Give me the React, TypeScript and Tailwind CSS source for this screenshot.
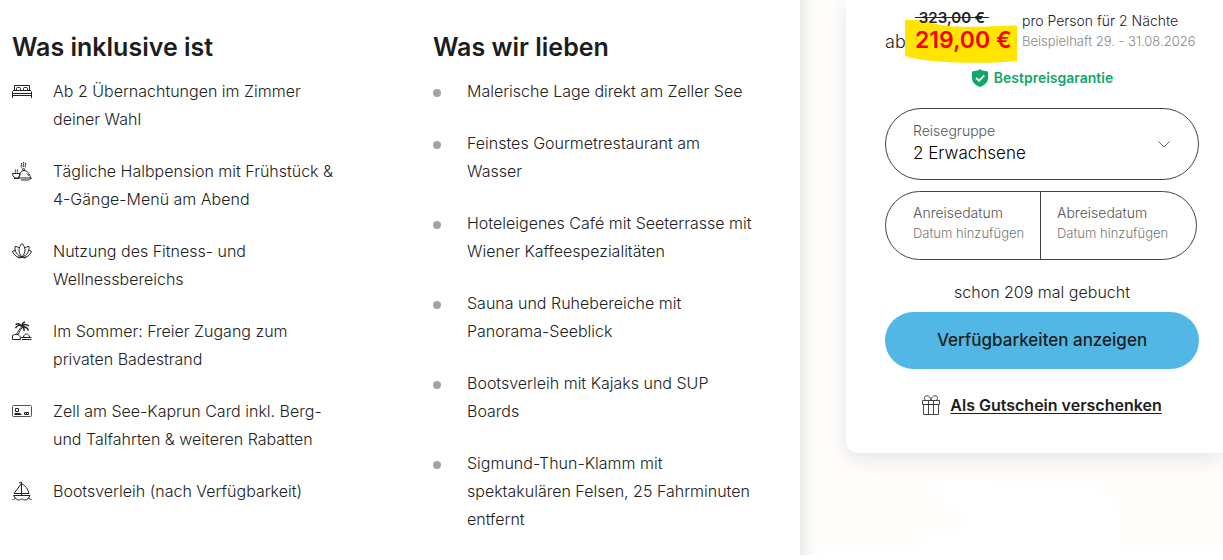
import type { ReactNode } from "react"

type InclusiveItem = {
  icon: ReactNode;
  text: string;
};

function LineIcon({ children }: { children: ReactNode }) {
  return (
    <svg
      viewBox="0 0 20 20"
      className="h-5 w-5 fill-none stroke-[#222]"
      strokeWidth={1}
      strokeLinejoin="round"
      aria-hidden="true"
    >
      {children}
    </svg>
  );
}

const inclusiveItems: InclusiveItem[] = [
  {
    icon: (
      <LineIcon>
        <path d="M2.5 9.5V4.5h15v5M1 9.5h18M.5 17V10.5M19.5 17V10.5M.5 12.5h19M.5 14.5h19" />
        <path d="M4.5 9V7.500c0-.6.400-1 1-1h2c.6 0 1 .4 1 1V9M11.500 9V7.500c0-.6.4-1 1-1h2c.6 0 1 .4 1 1V9" />
      </LineIcon>
    ),
    text: "Ab 2 Übernachtungen im Zimmer deiner Wahl",
  },
  {
    icon: (
      <LineIcon>
        <path d="M7 17c.3-4 2-7.500 5-7.500s6 3.500 6.500 7.500M7 17h12.500c-1 1.500-2.500 2-4 2H9" />
        <circle cx="11.500" cy="8.300" r="1" />
        <path d="M.5 12.500h7.500c0 3-1.500 4.500-3.500 4.500S.5 15.500.5 12.500zM2 17.500h5M3.500 11.500c-1-1 .8-1.700 0-3M5.500 11.500c-1-1 .8-1.700 0-3" />
        <path d="M9.500 6.500c-1.500-1.500 1-2.500 0-4.500M11.500 6c-1.500-1.500 1.200-3 0-5M13.500 6.500c-1.500-1.500 1-2.500 0-4.500M15 12.500c.8.6 1.200 1.400 1.500 2.300" />
      </LineIcon>
    ),
    text: "Tägliche Halbpension mit Frühstück & 4-Gänge-Menü am Abend",
  },
  {
    icon: (
      <LineIcon>
        <path d="M10 2.500c-4 4-4 9 0 13.500 4-4.500 4-9.500 0-13.500z" />
        <path d="M7.200 7C6 6 4.500 5.500 3 5.500c-.5 5 2 9 7 10.500 5-1.500 7.500-5.500 7-10.500-1.500 0-3 .5-4.200 1.500" />
        <path d="M3 9.500l-2.500.800c1.500 4 5 7 9.500 5.700 4.500 1.300 8-1.700 9.500-5.700L17 9.500M5 15.500c1 1.500 3 2 5 .5 2 1.500 4 1 5-.5" />
      </LineIcon>
    ),
    text: "Nutzung des Fitness- und Wellnessbereichs",
  },
  {
    icon: (
      <LineIcon>
        <path d="M.5 18.500v-4l2-1h3.500l2 2 .5 3zM10 18.500h9.500M9 16.500h10.500" />
        <path d="M4.500 13.500C5.500 11 7 8.500 9.500 6M6.500 13.500c.5-2.500 2-5 4-7" />
        <path d="M10 5.500C8 3.500 5.500 4 3.500 7M10 5.500C8 2.500 6 2 3.500 3.500M10 5.500c0-3 1-4 3-4.500M10 5.500c2-2.500 4.500-2.500 7-.5M10 5.500c3 0 5.500 1 6.500 4M10 5.500c1.500 1 2.500 2.500 2 4.500" strokeWidth={1.4} />
        <path d="M11.500 16c.4-2 1.500-3 3-3s2.700 1 3 3" />
      </LineIcon>
    ),
    text: "Im Sommer: Freier Zugang zum privaten Badestrand",
  },
  {
    icon: (
      <LineIcon>
        <rect x=".5" y="4.500" width="19" height="11" rx="1" className="stroke-[#555]" />
        <path d="M3.500 7.500h3v3h-3zM2.500 12.500h6M2.500 13.500h7M12.500 11.500h4v2h-4zM14.500 11v3" />
      </LineIcon>
    ),
    text: "Zell am See-Kaprun Card inkl. Berg- und Talfahrten & weiteren Rabatten",
  },
  {
    icon: (
      <LineIcon>
        <path d="M9.500 1v14M9.500 2.500L2 12.500h7.500zM9.500 2.500c4 2 6.500 5.500 7.500 10H9.500M7 1.500l2.500.5" />
        <path d="M1.500 14.500H18c-.4 1-1 2-2 3M1.500 14.500l2 3" />
        <path d="M.5 18.500c1.500 0 2-.5 3-1.500 1 1.500 2 2 3.200 2s2.300-.5 3.300-1.500c1 1 2 1.500 3.200 1.500s2.300-.5 3.300-2c.8 1 1.500 1.500 3 1.500" />
      </LineIcon>
    ),
    text: "Bootsverleih (nach Verfügbarkeit)",
  },
];

const lovedItems = [
  "Malerische Lage direkt am Zeller See",
  "Feinstes Gourmetrestaurant am Wasser",
  "Hoteleigenes Café mit Seeterrasse mit Wiener Kaffeespezialitäten",
  "Sauna und Ruhebereiche mit Panorama-Seeblick",
  "Bootsverleih mit Kajaks und SUP Boards",
  "Sigmund-Thun-Klamm mit spektakulären Felsen, 25 Fahrminuten entfernt",
];

function Highlights() {
  return (
    <main className="relative z-10 grid flex-1 grid-cols-2 gap-x-[92px] bg-white pt-8 pr-[38px] pb-5 pl-3">
      <section>
        <h2 className="text-[25px] leading-[30px] font-semibold text-[#1d1d1d]">Was inklusive ist</h2>
        <ul className="mt-[15px] flex flex-col gap-6">
          {inclusiveItems.map((item) => (
            <li key={item.text} className="flex gap-[21px]">
              <span className="flex h-7 shrink-0 items-center">{item.icon}</span>
              <span className="text-base leading-7 font-light">{item.text}</span>
            </li>
          ))}
        </ul>
      </section>

      <section>
        <h2 className="text-[25px] leading-[30px] font-semibold text-[#1d1d1d]">Was wir lieben</h2>
        <ul className="mt-[15px] flex flex-col gap-6 pr-[6px]">
          {lovedItems.map((text) => (
            <li key={text} className="flex items-start gap-[26px]">
              <span className="mt-3 h-2 w-2 shrink-0 rounded-full bg-[#a3a3a3]" />
              <span className="text-base leading-7 font-light">{text}</span>
            </li>
          ))}
        </ul>
      </section>
    </main>
  );
}

function Price() {
  return (
    <div className="flex items-start">
      <span className="mt-[22px] w-5 text-lg leading-6 font-light">ab</span>
      <div className="relative w-[112px] pl-[10px]">
        <svg
          viewBox="0 0 112 44"
          className="absolute top-3 left-0 h-11 w-28 fill-[#ffe500]"
          aria-hidden="true"
        >
          <path d="M0 0H14C26 2 34 6 50 6.500C72 7.500 92 6 112 5.500V41C92 43 72 43 52 42.500C32 42 14 40 0 36Z" />
        </svg>
        <del className="relative block text-[15px] leading-5 font-semibold whitespace-pre text-[#222]"> 323,00 € </del>
        <strong className="relative block text-[23px] leading-6 font-semibold whitespace-nowrap text-[#fa0000]">
          219,00 €
        </strong>
      </div>
      <div className="ml-[5px] pt-[3px] leading-5 font-light whitespace-nowrap">
        <p className="text-sm leading-5">pro Person für 2 Nächte</p>
        <p className="text-[13px] leading-5 text-[#888]">Beispielhaft 29. - 31.08.2026</p>
      </div>
    </div>
  );
}

type DateFieldProps = {
  id: string;
  label: string;
  className: string;
};

function DateField({ id, label, className }: DateFieldProps) {
  return (
    <div className={className}>
      <label htmlFor={id} className="block text-sm leading-5 font-light text-[#555]">
        {label}
      </label>
      <input
        id={id}
        type="text"
        placeholder="Datum hinzufügen"
        className="block w-full bg-transparent text-[13px] leading-5 font-light outline-none placeholder:text-[#777]"
      />
    </div>
  );
}

function BookingCard() {
  return (
    <div className="relative rounded-bl-xl bg-white pt-2 pr-6 pb-9 pl-[39px] shadow-[0_6px_22px_rgba(0,0,0,0.11)]">
      <Price />

      <p className="mt-[14px] flex items-center justify-center gap-[5px] text-sm leading-5 font-semibold text-[#10a66a]">
        <svg viewBox="0 0 18 18" className="h-[18px] w-[18px]" aria-hidden="true">
          <path
            d="M9 0l1.500 1.200L17 2.500V9c0 4.500-3.500 7.300-8 9-4.500-1.700-8-4.500-8-9V2.500l6.500-1.300z"
            className="fill-[#10a66a]"
          />
          <path d="M5 8.800l3 3 5.200-5.300" className="fill-none stroke-white" strokeWidth={1.8} />
        </svg>
        Bestpreisgarantie
      </p>

      <div className="relative mt-5 h-[72px] rounded-full border border-[#444] px-[27px] pt-3">
        <label htmlFor="group" className="block text-sm leading-5 font-light text-[#555]">
          Reisegruppe
        </label>
        <select
          id="group"
          className="block w-full appearance-none bg-transparent text-[17px] leading-6 font-light text-black outline-none"
        >
          <option>2 Erwachsene</option>
        </select>
        <svg
          viewBox="0 0 12 7"
          className="pointer-events-none absolute top-8 right-7 h-[7px] w-3 fill-none stroke-[#5b4a52]"
          strokeWidth={0.9}
          aria-hidden="true"
        >
          <path d="M.5.5L6 6 11.500.5" />
        </svg>
      </div>

      <div className="mt-[11px] mr-[2px] grid h-[69px] grid-cols-2 rounded-full border border-[#444]">
        <DateField id="arrival" label="Anreisedatum" className="border-r border-[#444] pt-[11px] pl-[27px]" />
        <DateField id="departure" label="Abreisedatum" className="pt-[11px] pr-2 pl-4" />
      </div>

      <p className="mt-5 text-center text-base leading-6 font-light">schon 209 mal gebucht</p>

      <button
        type="button"
        className="mt-2 h-[57px] w-full rounded-full bg-[#52b7e4] text-[17px] font-medium text-[#1d1d1d]"
      >
        Verfügbarkeiten anzeigen
      </button>

      <div className="mt-6 flex items-center justify-center gap-[10px]">
        <svg viewBox="0 0 18 20" className="h-5 w-[18px] fill-none stroke-[#333]" strokeWidth={0.9} aria-hidden="true">
          <path d="M.5 5.500h17v4H.5zM1.500 9.500h15v10h-15zM6.500 5.500v14M11.500 5.500v14" />
          <path d="M9 5.500C8.500 2.500 7 .7 5 .7 3.300.7 2.500 1.800 2.500 3s.6 2 1.500 2.500M9 5.500C9.500 2.500 11 .7 13 .7c1.700 0 2.500 1.100 2.500 2.300s-.6 2-1.500 2.500" />
        </svg>
        <a href="#gutschein" className="text-base leading-6 font-semibold text-[#1d1d1d] underline underline-offset-2">
          Als Gutschein verschenken
        </a>
      </div>
    </div>
  );
}

export default function App() {
  return (
    <div className="flex overflow-hidden bg-[#fffefc] font-['Inter',sans-serif] text-[#222]">
      <Highlights />
      <aside className="w-[423px] shrink-0 bg-linear-to-r from-[#ececeb] from-0% via-[#fcfbfa] via-3% to-[#fffefc] to-5% pl-[46px]">
        <BookingCard />
        <svg viewBox="0 0 220 74" className="mt-7 ml-[72px] h-[74px] w-[220px] fill-white" aria-hidden="true">
          <path d="M28 0C65 1 92 4 110 8C145 5 178 1 192 20C204 34 206 54 196 74H0C0 60 14 54 46 49V27C20 24 20 5 28 0Z" />
        </svg>
      </aside>
    </div>
  );
}
